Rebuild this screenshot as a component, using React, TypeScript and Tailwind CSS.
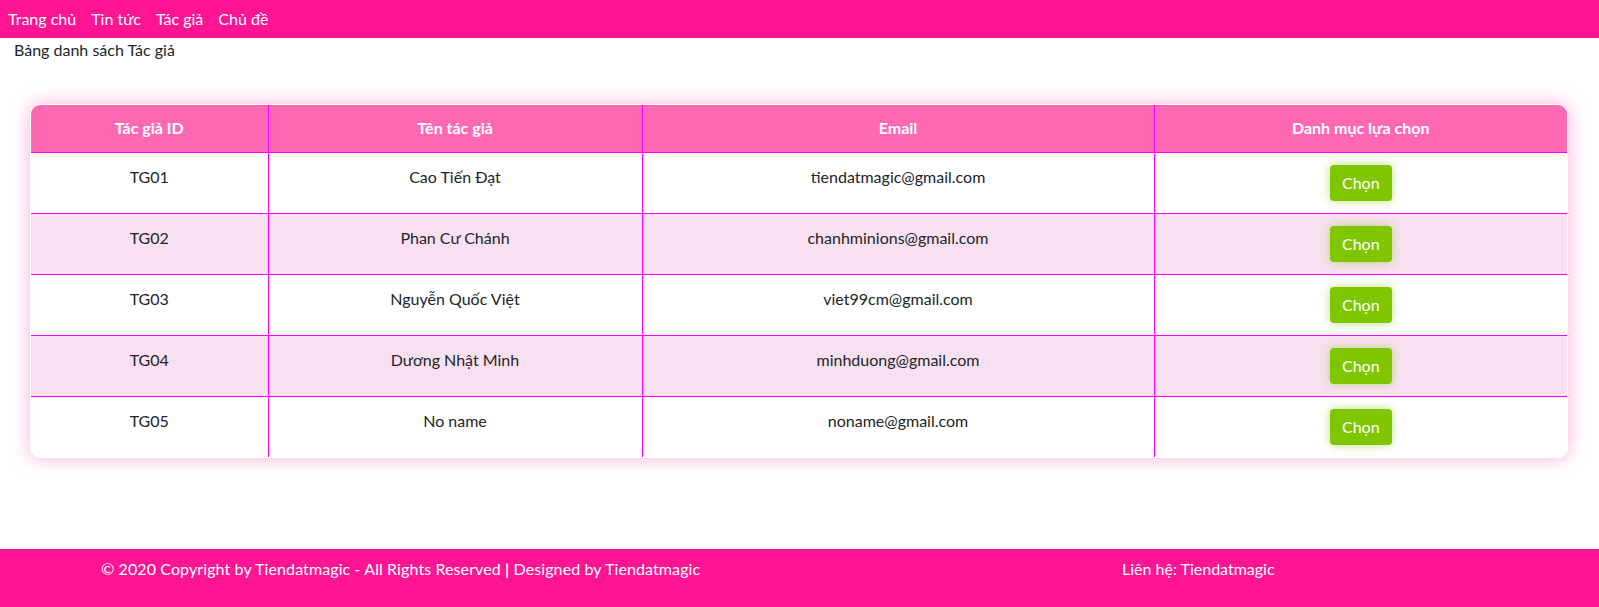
import React from "react";

const rows = [
  { id: "TG01", name: "Cao Tiến Đạt", email: "tiendatmagic@gmail.com" },
  { id: "TG02", name: "Phan Cư Chánh", email: "chanhminions@gmail.com" },
  { id: "TG03", name: "Nguyễn Quốc Việt", email: "viet99cm@gmail.com" },
  { id: "TG04", name: "Dương Nhật Minh", email: "minhduong@gmail.com" },
  { id: "TG05", name: "No name", email: "noname@gmail.com" },
];

export default function App() {
  return (
    <div
      className="min-h-[607px] bg-white text-[#212529] text-[16px] leading-[24px] flex flex-col"
      style={{ fontFamily: "Lato, 'Noto Sans', sans-serif" }}
    >
      <nav className="h-[38px] bg-[#ff1493] flex items-center pl-[8px] gap-[15px] text-white">
        <span>Trang chủ</span>
        <span>Tin tức</span>
        <span>Tác giả</span>
        <span>Chủ đề</span>
      </nav>
      <div className="pl-[14px] h-[24px]">Bảng danh sách Tác giả</div>
      <div className="pl-[30px] pr-[31px] mt-[42px]">
        <div className="rounded-[10px] overflow-hidden bg-white border border-white shadow-[0_0_18px_rgba(255,105,180,0.55)]">
          <table className="w-full table-fixed border-collapse text-center">
            <colgroup>
              <col className="w-[237px]" />
              <col className="w-[374px]" />
              <col className="w-[512px]" />
              <col />
            </colgroup>
            <thead>
              <tr className="bg-[#ff69b4] text-white font-bold">
                <th className="h-[47px] px-[12px] border-r border-[#ff00ff]">Tác giả ID</th>
                <th className="px-[12px] border-r border-[#ff00ff]">Tên tác giả</th>
                <th className="px-[12px] border-r border-[#ff00ff]">Email</th>
                <th className="px-[12px]">Danh mục lựa chọn</th>
              </tr>
            </thead>
            <tbody>
              {rows.map((r, i) => (
                <tr
                  key={r.id}
                  className={`border-t border-[#ff00ff] ${i % 2 === 1 ? "bg-[#f8e0f0]" : "bg-white"}`}
                >
                  <td className="align-top p-[12px] border-r border-[#ff00ff]">{r.id}</td>
                  <td className="align-top p-[12px] border-r border-[#ff00ff]">{r.name}</td>
                  <td className="align-top p-[12px] border-r border-[#ff00ff]">{r.email}</td>
                  <td className="p-[12px]">
                    <button className="h-[36px] px-[12px] rounded-[4px] bg-[#80c600] text-white shadow-[0_0_10px_rgba(128,198,0,0.5)]">
                      Chọn
                    </button>
                  </td>
                </tr>
              ))}
            </tbody>
          </table>
        </div>
      </div>
      <footer className="mt-auto h-[58px] bg-[#ff1493] text-white flex pt-[8px]">
        <div className="pl-[101px] w-[1122px] tracking-[0.1px]">
          © 2020 Copyright by Tiendatmagic - All Rights Reserved <b>|</b> Designed by Tiendatmagic
        </div>
        <div>Liên hệ: Tiendatmagic</div>
      </footer>
    </div>
  );
}
